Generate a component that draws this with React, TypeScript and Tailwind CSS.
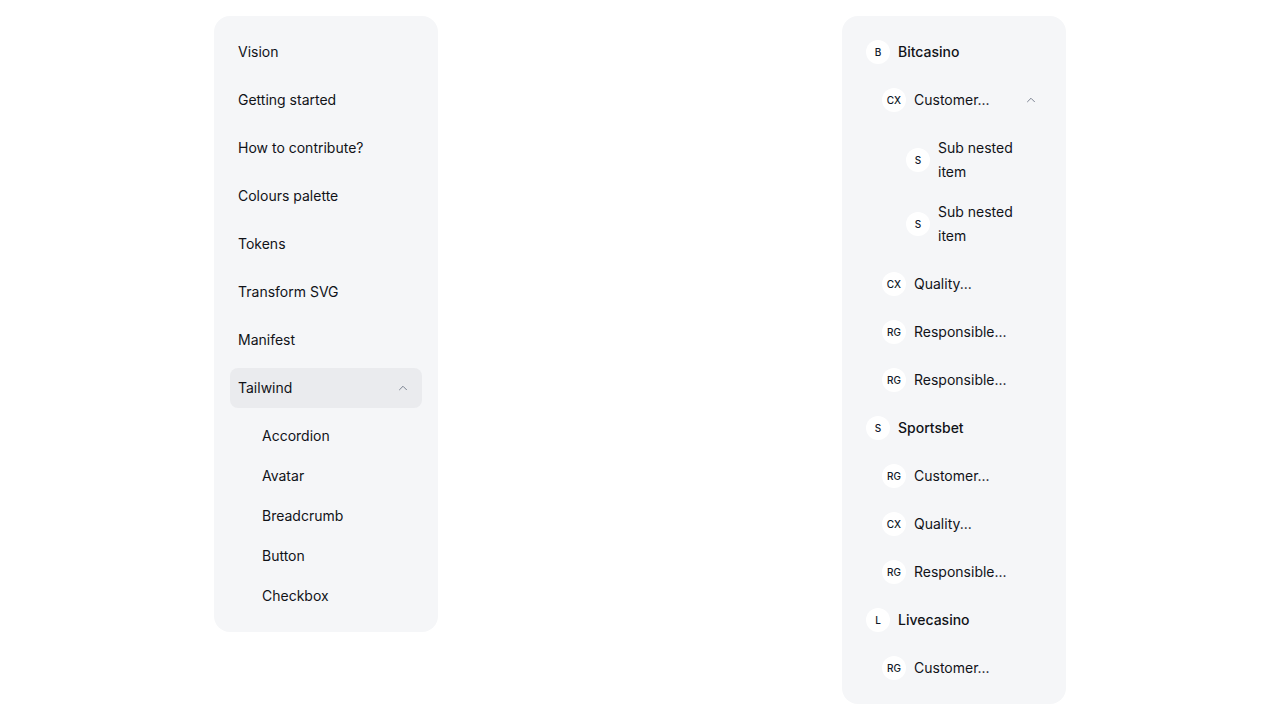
import { ChevronUp } from "lucide-react";

type Node = {
  label: string;
  avatar: string;
  children?: Node[];
  open?: boolean;
};

const docs = [
  "Vision",
  "Getting started",
  "How to contribute?",
  "Colours palette",
  "Tokens",
  "Transform SVG",
  "Manifest",
];

const tailwindItems = ["Accordion", "Avatar", "Breadcrumb", "Button", "Checkbox"];

const brands: Node[] = [
  {
    label: "Bitcasino",
    avatar: "B",
    children: [
      {
        label: "Customer...",
        avatar: "CX",
        open: true,
        children: [
          { label: "Sub nested item", avatar: "S" },
          { label: "Sub nested item", avatar: "S" },
        ],
      },
      { label: "Quality...", avatar: "CX" },
      { label: "Responsible...", avatar: "RG" },
      { label: "Responsible...", avatar: "RG" },
    ],
  },
  {
    label: "Sportsbet",
    avatar: "S",
    children: [
      { label: "Customer...", avatar: "RG" },
      { label: "Quality...", avatar: "CX" },
      { label: "Responsible...", avatar: "RG" },
    ],
  },
  {
    label: "Livecasino",
    avatar: "L",
    children: [{ label: "Customer...", avatar: "RG" }],
  },
];

const Avatar = ({ text }: { text: string }) => (
  <div className="flex h-6 w-6 shrink-0 items-center justify-center rounded-full bg-white text-[10px] font-medium text-gray-900">
    {text}
  </div>
);

function DocsMenu() {
  return (
    <nav className="flex w-56 flex-col gap-2 rounded-2xl bg-[#f5f6f8] p-4">
      {docs.map((d) => (
        <div key={d} className="flex h-10 items-center px-2 text-sm text-[#111318]">
          {d}
        </div>
      ))}
      <div className="flex h-10 items-center justify-between rounded-lg bg-[#eaebee] pl-2 pr-3 text-sm text-[#111318]">
        <span>Tailwind</span>
        <ChevronUp size={14} strokeWidth={1.5} className="text-gray-500" />
      </div>
      <div className="flex flex-col">
        {tailwindItems.map((t) => (
          <div key={t} className="flex h-10 items-center pl-8 text-sm text-[#111318]">
            {t}
          </div>
        ))}
      </div>
    </nav>
  );
}

function BrandsMenu() {
  return (
    <nav className="flex w-56 flex-col gap-2 rounded-2xl bg-[#f5f6f8] p-4">
      {brands.map((b) => (
        <div key={b.label} className="contents">
          <div className="flex h-10 items-center gap-2 px-2 text-sm font-medium text-[#111318]">
            <Avatar text={b.avatar} />
            <span>{b.label}</span>
          </div>
          {b.children?.map((c, i) => (
            <div key={i} className="contents">
              <div className="flex h-10 items-center justify-between pl-6 pr-3 text-sm text-[#111318]">
                <div className="flex items-center gap-2">
                  <Avatar text={c.avatar} />
                  <span>{c.label}</span>
                </div>
                {c.open && <ChevronUp size={14} strokeWidth={1.5} className="text-gray-500" />}
              </div>
              {c.open && (
                <div className="flex flex-col">
                  {c.children?.map((s, j) => (
                    <div key={j} className="flex items-center gap-2 py-2 pl-12 pr-2 text-sm leading-6 text-[#111318]">
                      <Avatar text={s.avatar} />
                      <span className="w-[80px]">{s.label}</span>
                    </div>
                  ))}
                </div>
              )}
            </div>
          ))}
        </div>
      ))}
    </nav>
  );
}

export default function App() {
  return (
    <div className="min-h-screen bg-white font-['Inter',sans-serif]">
      <div className="flex items-start gap-[404px] pl-[214px] pt-4">
        <DocsMenu />
        <BrandsMenu />
      </div>
    </div>
  );
}
